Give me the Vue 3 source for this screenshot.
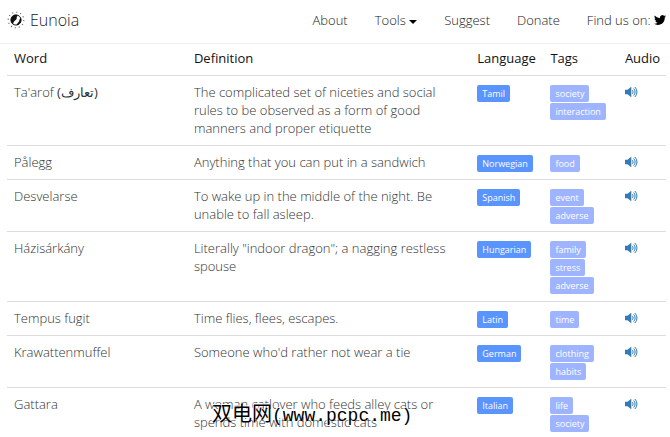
<template>
  <div class="page">
    <header class="navbar">
      <a class="brand" href="#">
        <svg class="brand__logo" viewBox="0 0 18 18" aria-hidden="true">
          <circle
            cx="9" cy="9" r="7.8" fill="none" stroke="#666" stroke-width="1.1"
            stroke-dasharray="1.2 2.88"
          />
          <circle cx="9" cy="9" r="5.1" fill="#fff" stroke="#222" stroke-width="1" />
          <path d="M8 3.8C5.300 4.300 3.800 6.500 3.800 9c0 1.800.900 3.400 2.300 4.300.4-1.700.4-2.600 1.700-3.500 1.300-.9 2-1.500 1.900-2.700-.1-1 .2-1.700 1.200-2.600C10 4 9 3.700 8 3.800z" fill="#111" />
          <path d="M13.600 6.800c-.8.8-1.200 1.600-1.200 2.500 0 1.700-1.700 2.200-3 4.700 2.700 0 4.700-2.200 4.800-4.800 0-.9-.2-1.700-.6-2.400z" fill="#111" />
        </svg>
        <span>Eunoia</span>
      </a>
      <nav class="menu">
        <a href="#">About</a>
        <a href="#">Tools <span class="caret"></span></a>
        <a href="#">Suggest</a>
        <a href="#">Donate</a>
        <a href="#">Find us on:
          <svg class="twitter" viewBox="0 0 24 24" role="img" aria-label="Twitter">
            <path d="M23.950 4.570a10 10 0 0 1-2.820.770 4.960 4.960 0 0 0 2.160-2.720 9.900 9.900 0 0 1-3.120 1.190 4.920 4.920 0 0 0-8.380 4.480C7.690 8.090 4.070 6.130 1.640 3.160a4.820 4.820 0 0 0-.660 2.470c0 1.710.870 3.210 2.190 4.100a4.900 4.900 0 0 1-2.230-.620v.060a4.920 4.920 0 0 0 3.950 4.830 5 5 0 0 1-2.210.080 4.940 4.940 0 0 0 4.600 3.420A9.870 9.870 0 0 1 0 19.540a14 14 0 0 0 7.550 2.210c9.050 0 14-7.500 14-13.980 0-.210 0-.420-.020-.630a9.940 9.940 0 0 0 2.460-2.550z" />
          </svg>
        </a>
      </nav>
    </header>

    <main class="content">
      <table class="words">
        <thead>
          <tr>
            <th class="col-word">Word</th>
            <th class="col-definition">Definition</th>
            <th class="col-language">Language</th>
            <th class="col-tags">Tags</th>
            <th class="col-audio">Audio</th>
          </tr>
        </thead>
        <tbody>
          <tr v-for="item in words" :key="item.word">
            <td>{{ item.word }}<span v-if="item.native" class="native"> ({{ item.native }})</span></td>
            <td class="definition">{{ item.definition }}</td>
            <td class="labels">
              <div class="label-line">
                <span class="label label--language">{{ item.language }}</span>
              </div>
            </td>
            <td class="labels">
              <div v-for="tag in item.tags" :key="tag" class="label-line">
                <span class="label label--tag">{{ tag }}</span>
              </div>
            </td>
            <td>
              <button class="play" type="button" :aria-label="'Play ' + item.word">
                <svg viewBox="0 0 13 12" aria-hidden="true">
                  <path d="M0 3.800h2.500L6.300 0.800v10.400L2.500 8.200H0z" fill="#337ab7" />
                  <path d="M7.400 4.200a2.600 2.600 0 0 1 0 3.600M8.600 2.500a4.800 4.800 0 0 1 0 7M9.800 1a6.800 6.800 0 0 1 0 10" fill="none" stroke="#337ab7" stroke-width="1" />
                </svg>
              </button>
            </td>
          </tr>
        </tbody>
      </table>
    </main>

    <div class="watermark">双电网<span class="watermark__site">(www.pcpc.me)</span></div>
  </div>
</template>

<script setup>
const words = [
  {
    word: "Ta'arof",
    native: 'تعارف',
    definition: 'The complicated set of niceties and social rules to be observed as a form of good manners and proper etiquette',
    language: 'Tamil',
    tags: ['society', 'interaction'],
  },
  {
    word: 'Pålegg',
    definition: 'Anything that you can put in a sandwich',
    language: 'Norwegian',
    tags: ['food'],
  },
  {
    word: 'Desvelarse',
    definition: 'To wake up in the middle of the night. Be unable to fall asleep.',
    language: 'Spanish',
    tags: ['event', 'adverse'],
  },
  {
    word: 'Házisárkány',
    definition: 'Literally "indoor dragon"; a nagging restless spouse',
    language: 'Hungarian',
    tags: ['family', 'stress', 'adverse'],
  },
  {
    word: 'Tempus fugit',
    definition: 'Time flies, flees, escapes.',
    language: 'Latin',
    tags: ['time'],
  },
  {
    word: 'Krawattenmuffel',
    definition: "Someone who'd rather not wear a tie",
    language: 'German',
    tags: ['clothing', 'habits'],
  },
  {
    word: 'Gattara',
    definition: 'A woman catlover who feeds alley cats or spends time with domestic cats',
    language: 'Italian',
    tags: ['life', 'society'],
  },
]
</script>

<style>
body {
  background: #fff;
}
</style>

<style scoped>
.page {
  position: relative;
  font-family: "Open Sans", "Noto Sans", sans-serif;
  font-size: 13px;
  font-weight: 300;
  line-height: 18px;
  color: #333;
}

.navbar {
  display: flex;
  align-items: center;
  justify-content: space-between;
  height: 44px;
  padding: 0 4px 3px 7px;
  border-bottom: 1px solid #eee;
  box-sizing: border-box;
}

.navbar a {
  color: #222;
  text-decoration: none;
}

.brand {
  display: flex;
  align-items: center;
  gap: 5px;
  font-size: 16px;
}

.brand__logo {
  width: 18px;
  height: 18px;
}

.menu {
  display: flex;
  gap: 27px;
  white-space: nowrap;
}

.caret {
  display: inline-block;
  vertical-align: middle;
  border-top: 4px solid #000;
  border-left: 4px solid transparent;
  border-right: 4px solid transparent;
}

.twitter {
  width: 12px;
  height: 12px;
  vertical-align: -1px;
  fill: #000;
}

.content {
  padding: 0 4px 0 7px;
}

.words {
  width: 100%;
  table-layout: fixed;
  border-collapse: collapse;
}

.words th,
.words td {
  box-sizing: border-box;
  padding: 7px 7px 8px;
  text-align: left;
  vertical-align: top;
}

.words th {
  padding: 5px 7px 8px;
  font-weight: 500;
  color: #111;
}

.words td {
  border-top: 1px solid #ddd;
}

.words .definition {
  padding-right: 24px;
}

.words .labels {
  padding: 9px 7px 6px;
}

.words .col-word {
  width: 27.3%;
}

.words .col-definition {
  width: 43%;
}

.words .col-language {
  width: 11.1%;
}

.words .col-tags {
  width: 11.3%;
}

.words .col-audio {
  width: 7.3%;
  padding-right: 0;
}

.native {
  font-weight: 400;
}

.label-line {
  height: 18px;
}

.label {
  display: inline-block;
  padding: 0 5px;
  border-radius: 2px;
  font-size: 9px;
  font-weight: 400;
  line-height: 17px;
  color: #fff;
  vertical-align: top;
}

.label--language {
  background: #5a94ff;
}

.label--tag {
  background: #9fb4ff;
}

.play {
  display: block;
  padding: 3px 0;
  border: none;
  background: none;
  cursor: pointer;
}

.play svg {
  display: block;
  width: 13px;
  height: 12px;
}

.watermark {
  position: absolute;
  top: 401px;
  left: 212px;
  font-family: "Noto Sans CJK SC", sans-serif;
  font-size: 20px;
  font-weight: 400;
  line-height: 24px;
  color: #000;
  text-shadow: -1px -1px 0 #fff;
  white-space: nowrap;
  pointer-events: none;
}

.watermark__site {
  font-family: "Liberation Mono", monospace;
  font-size: 18px;
}
</style>
